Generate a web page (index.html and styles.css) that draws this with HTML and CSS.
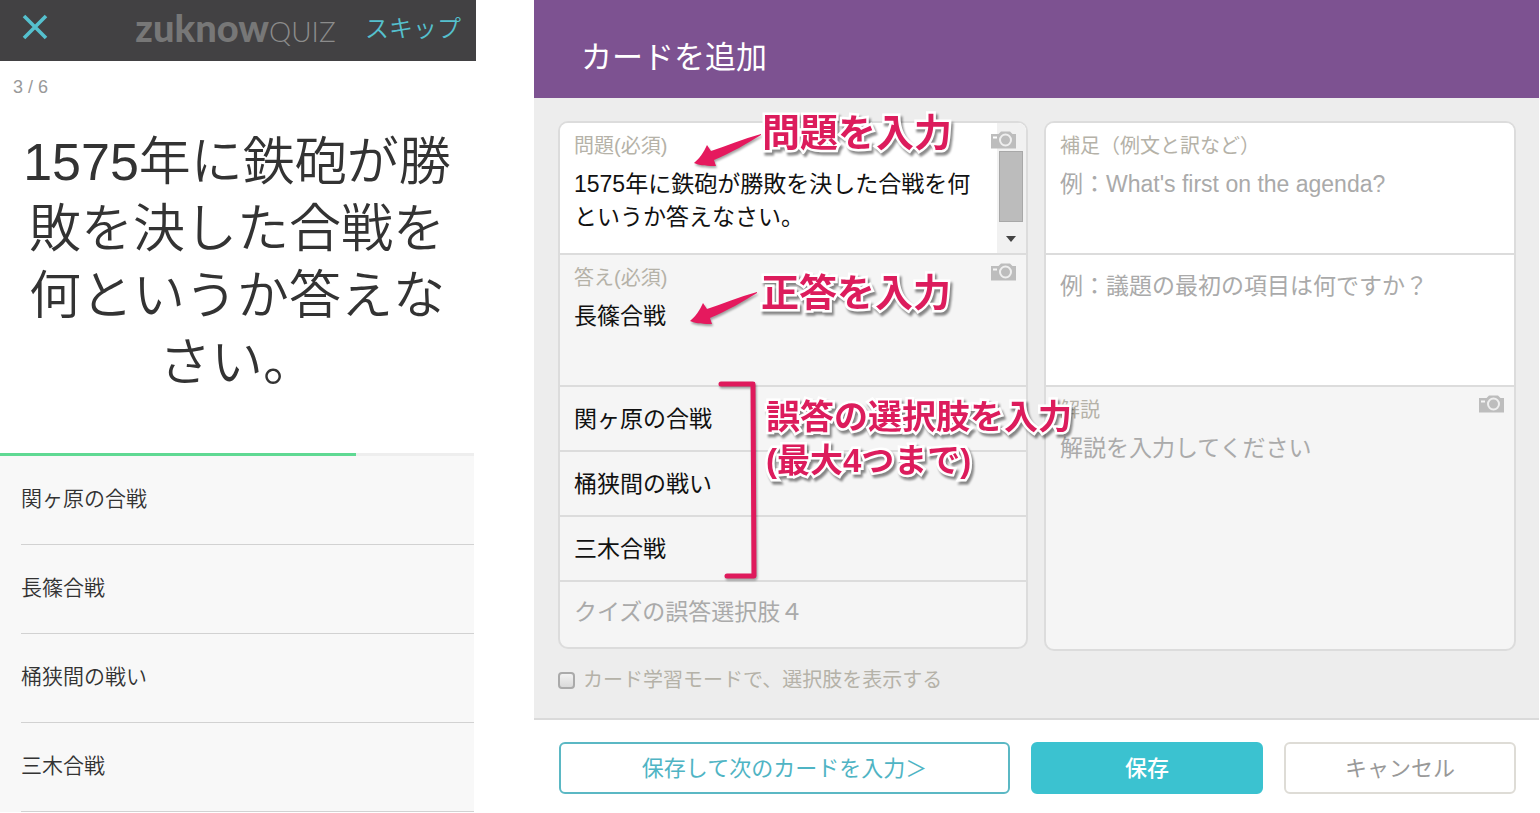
FILE: index.html
```html
<!DOCTYPE html>
<html lang="ja">
<head>
<meta charset="utf-8">
<meta name="viewport" content="width=device-width, initial-scale=1">
<title>カードを追加</title>
<link rel="stylesheet" href="styles.css">
</head>
<body>
<svg class="defs" aria-hidden="true">
  <symbol id="camera" viewBox="0 0 25 18">
    <path fill="#bdbdbd" fill-rule="evenodd" d="M0 3h7.500L10 0.500h9L21.500 3H25v14.500H0zM2 5.500v2h4v-2z"/>
    <circle cx="14.500" cy="9" r="5.500" fill="#bdbdbd" stroke="#efefef" stroke-width="2"/>
  </symbol>
</svg>
<main class="page">
  <section class="quiz">
    <header class="quiz-bar">
      <button class="quiz-close" type="button" aria-label="閉じる">
        <svg width="26" height="26" viewBox="0 0 26 26"><path d="M2 2l22 22M24 2L2 24" stroke="#55c0ce" stroke-width="3.600" fill="none"/></svg>
      </button>
      <div class="logo"><span class="logo-name">zuknow</span><span class="logo-kind">QUIZ</span></div>
      <button class="quiz-skip" type="button">スキップ</button>
    </header>
    <div class="quiz-body">
      <p class="quiz-count">3 / 6</p>
      <h1 class="quiz-question">1575年に鉄砲が勝敗を決した合戦を何というか答えなさい。</h1>
      <div class="progress"><div class="progress-fill"></div></div>
      <ul class="choices">
        <li><button class="choice" type="button">関ヶ原の合戦</button></li>
        <li><button class="choice" type="button">長篠合戦</button></li>
        <li><button class="choice" type="button">桶狭間の戦い</button></li>
        <li><button class="choice" type="button">三木合戦</button></li>
      </ul>
    </div>
  </section>

  <form class="editor">
    <header class="editor-head"><h2 class="editor-title">カードを追加</h2></header>
    <div class="editor-body">
      <div class="column column-main">
        <div class="card">
          <div class="field field-tall field-white">
            <label class="label" for="question">問題(必須)</label>
            <textarea class="text" id="question" rows="2">1575年に鉄砲が勝敗を決した合戦を何というか答えなさい。</textarea>
            <div class="scrollbar" aria-hidden="true"><div class="thumb"></div><div class="arrow-down"></div></div>
            <button class="camera" type="button" aria-label="問題の画像を追加"><svg width="25" height="18"><use href="#camera"/></svg></button>
          </div>
          <div class="field field-tall">
            <label class="label" for="answer">答え(必須)</label>
            <textarea class="text" id="answer" rows="2">長篠合戦</textarea>
            <button class="camera" type="button" aria-label="答えの画像を追加"><svg width="25" height="18"><use href="#camera"/></svg></button>
          </div>
          <input class="option" type="text" aria-label="クイズの誤答選択肢１" value="関ヶ原の合戦">
          <input class="option" type="text" aria-label="クイズの誤答選択肢２" value="桶狭間の戦い">
          <input class="option" type="text" aria-label="クイズの誤答選択肢３" value="三木合戦">
          <input class="option" type="text" aria-label="クイズの誤答選択肢４" placeholder="クイズの誤答選択肢４">
        </div>
        <label class="check"><input class="check-box" type="checkbox"><span>カード学習モードで、選択肢を表示する</span></label>

        <svg class="marks" width="220" height="480" viewBox="0 0 220 480" aria-hidden="true">
          <defs>
            <path id="arrow" d="M67 0C49 5 32 12 17 17L13 11C10 18 5 25 0 29C7 32 14 32 22 32L20 26C37 19 54 9 67 1z"/>
          </defs>
          <use href="#arrow" x="136" y="13"/>
          <use href="#arrow" x="132" y="171"/>
          <path class="bracket" d="M163 263H195L196 455H169"/>
        </svg>
        <p class="callout callout-question">問題を入力</p>
        <p class="callout callout-answer">正答を入力</p>
        <p class="callout callout-options">誤答の選択肢を入力<br><span class="callout-note">(最大4つまで)</span></p>
      </div>

      <div class="column">
        <div class="card">
          <div class="field field-tall field-white">
            <label class="label" for="example">補足（例文と訳など）</label>
            <textarea class="text" id="example" rows="2" placeholder="例：What's first on the agenda?"></textarea>
          </div>
          <div class="field field-tall field-white field-plain">
            <textarea class="text" rows="3" aria-label="例文の訳" placeholder="例：議題の最初の項目は何ですか？"></textarea>
          </div>
          <div class="field field-note">
            <label class="label" for="note">解説</label>
            <textarea class="text" id="note" rows="6" placeholder="解説を入力してください"></textarea>
            <button class="camera" type="button" aria-label="解説の画像を追加"><svg width="25" height="18"><use href="#camera"/></svg></button>
          </div>
        </div>
      </div>
    </div>
    <footer class="editor-foot">
      <button class="btn btn-next" type="button">保存して次のカードを入力＞</button>
      <button class="btn btn-save" type="submit">保存</button>
      <button class="btn btn-cancel" type="button">キャンセル</button>
    </footer>
  </form>
</main>
</body>
</html>
```

FILE: styles.css
```css
* {
  box-sizing: border-box;
}

body {
  margin: 0;
  background: #fff;
  color: #111;
  font-family: "Liberation Sans", "Noto Sans CJK JP", sans-serif;
}

h1, h2, p, ul {
  margin: 0;
  padding: 0;
  font-weight: 400;
}

button, input, textarea {
  margin: 0;
  padding: 0;
  border: 0;
  background: none;
  color: inherit;
  font: inherit;
}

button {
  cursor: pointer;
}

svg {
  display: block;
}

.defs {
  position: absolute;
  width: 0;
  height: 0;
}

.page {
  display: grid;
  grid-template-columns: 476fr 1005fr;
  align-items: start;
  column-gap: 58px;
  padding-right: 1px;
}

/* Quiz screen */

.quiz-bar {
  display: flex;
  align-items: center;
  justify-content: space-between;
  height: 61px;
  padding: 0 15px 8px 22px;
  background: #424143;
  color: #55c0ce;
}

.logo {
  display: flex;
  align-items: baseline;
  margin-left: 58px;
  padding-top: 4px;
  color: #777;
  font-family: Lato, sans-serif;
  line-height: 44px;
}

.logo-name {
  font-size: 38px;
  font-weight: 900;
}

.logo-kind {
  color: #8c8c8c;
  font-size: 28px;
  font-weight: 300;
}

.quiz-skip {
  font-size: 24px;
  font-weight: 350;
}

.quiz-body {
  padding-right: 2px;
}

.quiz-count {
  padding: 14px 13px;
  color: #999;
  font-size: 18px;
  line-height: 24px;
}

.quiz-question {
  padding: 16px 18px 56px;
  color: #333;
  font-size: 52px;
  font-weight: 350;
  line-height: 67px;
  text-align: center;
}

.progress {
  height: 3px;
  background: #eee;
}

.progress-fill {
  width: 75%;
  height: 100%;
  background: #5fd993;
}

.choices {
  padding-left: 21px;
  background: #f8f8f8;
  list-style: none;
}

.choice {
  display: block;
  width: 100%;
  height: 89px;
  padding-bottom: 6px;
  border-bottom: 1px solid #d2d2d2;
  color: #333;
  font-size: 21px;
  font-weight: 350;
  text-align: left;
}

/* Card editor */

.editor-head {
  padding: 36px 47px 18px;
  background: #7d5291;
  color: #fff;
}

.editor-title {
  font-size: 31px;
  line-height: 44px;
}

.editor-body {
  display: grid;
  grid-template-columns: 470fr 472fr;
  align-items: start;
  column-gap: 16px;
  padding: 23px 23px 26px 24px;
  border-bottom: 2px solid #dadada;
  background: #ededed;
}

.column-main {
  position: relative;
}

.card {
  overflow: hidden;
  border: 2px solid #dcdcdc;
  border-radius: 10px;
  background: #f5f5f5;
}

.field {
  position: relative;
  padding: 11px 40px 0 14px;
  border-bottom: 2px solid #dcdcdc;
}

.field-tall {
  height: 132px;
}

.field-white {
  background: #fff;
}

.field-plain {
  padding-top: 15px;
}

.field-note {
  height: 262px;
  border-bottom: 0;
}

.label {
  display: block;
  margin-bottom: 10px;
  color: #b5b2a8;
  font-size: 20px;
  line-height: 24px;
}

.text {
  display: block;
  overflow: hidden;
  width: 100%;
  font-size: 23px;
  line-height: 33px;
  resize: none;
}

.text::placeholder,
.option::placeholder {
  color: #aaa;
  opacity: 1;
}

.scrollbar {
  position: absolute;
  top: 0;
  right: 0;
  bottom: 0;
  width: 29px;
  padding: 28px 3px 0 2px;
  background: #f1f1f1;
}

.thumb {
  height: 71px;
  border: 1px solid #a8a8a8;
  background: #bcbcbc;
}

.arrow-down {
  width: 0;
  margin: 14px auto 0;
  border: 5px solid transparent;
  border-top: 6px solid #444;
  border-bottom: 0;
}

.camera {
  position: absolute;
  top: 8px;
  right: 10px;
}

.option {
  display: block;
  width: 100%;
  height: 65px;
  padding: 0 14px 4px;
  border-bottom: 2px solid #dcdcdc;
  font-size: 23px;
}

.option:last-child {
  border-bottom: 0;
}

.check {
  display: flex;
  align-items: center;
  gap: 8px;
  margin-top: 19px;
  color: #b5b2a8;
  font-size: 20px;
  line-height: 24px;
}

.check-box {
  width: 17px;
  height: 17px;
  border: 2px solid #aaa;
  border-radius: 4px;
  background: linear-gradient(#f2f2f2, #dadada);
  appearance: none;
}

/* Hand-drawn guidance over the form */

.marks {
  position: absolute;
  top: 0;
  left: 0;
  z-index: 1;
  fill: #e5195e;
  filter: drop-shadow(1px 2px 1px rgba(0, 0, 0, 0.35));
  pointer-events: none;
}

.bracket {
  fill: none;
  stroke: #df1a5c;
  stroke-width: 5;
  stroke-linecap: round;
  stroke-linejoin: round;
}

.callout {
  position: absolute;
  z-index: 2;
  color: #dc1c5c;
  font-size: 38px;
  font-weight: 700;
  line-height: 43px;
  white-space: nowrap;
  -webkit-text-stroke: 5px #fff;
  paint-order: stroke fill;
  filter: drop-shadow(2px 3px 1px rgba(0, 0, 0, 0.45));
  pointer-events: none;
}

.callout-question {
  top: -9px;
  left: 204px;
}

.callout-answer {
  top: 151px;
  left: 203px;
}

.callout-options {
  top: 275px;
  left: 208px;
  font-size: 34px;
}

.callout-note {
  font-size: 33px;
}

.editor-foot {
  display: grid;
  grid-template-columns: 451fr 232fr 232fr;
  column-gap: 21px;
  padding: 22px 23px 18px 25px;
}

.btn {
  height: 52px;
  padding-bottom: 4px;
  border: 2px solid #dedcd6;
  border-radius: 6px;
  background: #fff;
  color: #999;
  font-size: 22px;
}

.btn-next {
  border-color: #5bb8c4;
  color: #4fb4c4;
}

.btn-save {
  border-color: #3bc2d0;
  background: #3bc2d0;
  color: #fff;
  font-weight: 500;
}
```
